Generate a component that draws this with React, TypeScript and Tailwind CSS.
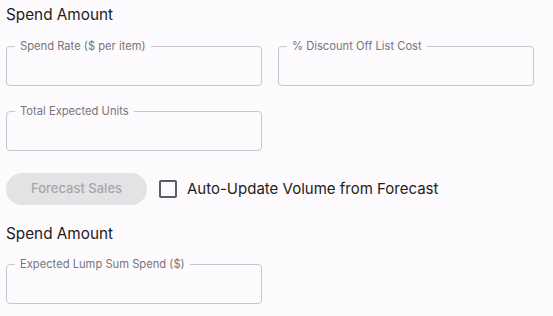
import { useState } from "react";

interface FieldProps {
    label: string;
}

function OutlinedField({ label }: FieldProps) {
    const [value, setValue] = useState("");
    return (
        <fieldset className="m-0 h-[46px] min-w-0 rounded-[4px] border border-[#c8c6cb] px-[8px] pb-0">
            <legend className="px-[5px] text-[11.2px] leading-[12px] text-[#77757b]">{label}</legend>
            <input
                value={value}
                onChange={(e) => setValue(e.target.value)}
                className="h-[28px] w-full bg-transparent text-[15px] text-[#1d1b20] outline-none"
            />
        </fieldset>
    );
}

export default function App() {
    const [autoUpdate, setAutoUpdate] = useState(false);

    return (
        <div className="min-h-[316px] w-[553px] bg-[#fdfbfe] px-[6px] pt-[5px] font-['Inter',sans-serif] text-[#1d1b20]">
            <h2 className="text-[15.3px] leading-[20px]">Spend Amount</h2>

            <div className="mt-[15px] grid w-[528px] grid-cols-2 gap-x-4 gap-y-[19px]">
                <OutlinedField label="Spend Rate ($ per item)" />
                <OutlinedField label="% Discount Off List Cost" />
                <OutlinedField label="Total Expected Units" />
            </div>

            <div className="mt-[22px] flex h-[32px] items-center">
                <button
                    disabled
                    className="h-[32px] w-[141px] rounded-full bg-[#e3e2e5] text-[13px] font-medium text-[#a7a6a9]"
                >
                    Forecast Sales
                </button>
                <label className="ml-[12px] flex cursor-pointer items-center gap-[10px]">
                    <input
                        type="checkbox"
                        checked={autoUpdate}
                        onChange={(e) => setAutoUpdate(e.target.checked)}
                        className="peer sr-only"
                    />
                    <span className="h-[18px] w-[18px] rounded-[2px] border-2 border-[#5e5c61]" />
                    <span className="text-[15px] leading-[20px]">Auto-Update Volume from Forecast</span>
                </label>
            </div>

            <h2 className="mt-[19px] text-[15.3px] leading-[20px]">Spend Amount</h2>

            <div className="mt-[14px] w-[256px]">
                <OutlinedField label="Expected Lump Sum Spend ($)" />
            </div>
        </div>
    );
}
